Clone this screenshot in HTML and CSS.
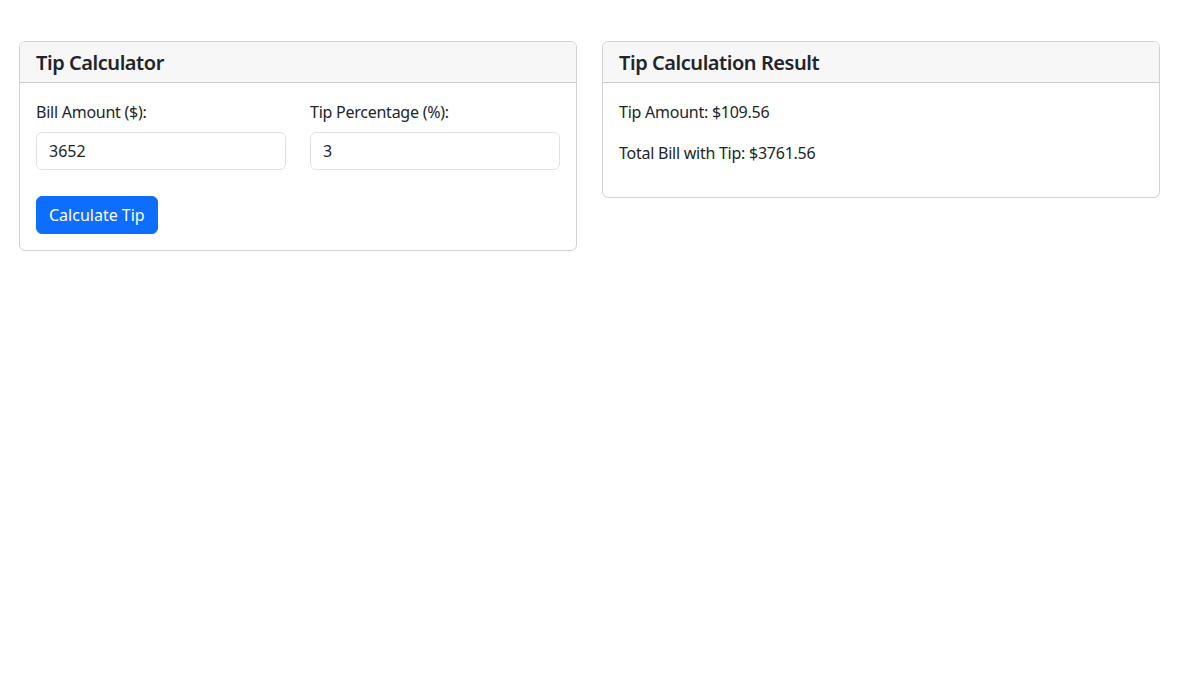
FILE: index.html
```html
<!DOCTYPE html>
<html lang="en">
<head>
  <meta charset="UTF-8" />
  <meta name="viewport" content="width=device-width, initial-scale=1.0"/>
  <title>Tip Calculator</title>
  <link rel="stylesheet" href="styles.css">
</head>
<body>
  <div class="page">
    <div class="card">
      <div class="card-header">
        <h5>Tip Calculator</h5>
      </div>
      <div class="card-body">
        <div class="fields">
          <div class="field">
            <label for="bill">Bill Amount ($):</label>
            <input type="number" id="bill" value="3652" />
          </div>
          <div class="field">
            <label for="tip">Tip Percentage (%):</label>
            <input type="number" id="tip" value="3" />
          </div>
        </div>
        <button class="btn" onclick="calculateTip()">Calculate Tip</button>
      </div>
    </div>

    <div class="card">
      <div class="card-header">
        <h5>Tip Calculation Result</h5>
      </div>
      <div class="card-body">
        <p>Tip Amount: $<span id="tipAmount">109.56</span></p>
        <p>Total Bill with Tip: $<span id="totalBill">3761.56</span></p>
      </div>
    </div>
  </div>

  <script>
    function calculateTip() {
      const bill = parseFloat(document.getElementById("bill").value) || 0;
      const pct = parseFloat(document.getElementById("tip").value) || 0;
      const tip = bill * pct / 100;
      document.getElementById("tipAmount").textContent = tip.toFixed(2);
      document.getElementById("totalBill").textContent = (bill + tip).toFixed(2);
    }
  </script>
</body>
</html>
```

FILE: styles.css
```css
body {
  margin: 0;
  font-family: "Segoe UI", "Noto Sans", sans-serif;
  font-size: 16px;
  line-height: 1.5;
  letter-spacing: -0.25px;
  color: #212529;
  background: #fff;
}

.page {
  display: flex;
  gap: 25px;
  padding: 41px 20px 0 19px;
  align-items: flex-start;
}

.card {
  flex: 1;
  border: 1px solid rgba(0, 0, 0, 0.175);
  border-radius: 6px;
  overflow: hidden;
}

.card-header {
  padding: 9px 16px 7px;
  background: #f7f7f7;
  border-bottom: 1px solid rgba(0, 0, 0, 0.175);
}

.card-header h5 {
  margin: 0;
  font-size: 20px;
  font-weight: 600;
  line-height: 1.2;
  letter-spacing: -0.45px;
}

.card-body {
  padding: 17px 16px 16px;
}

.fields {
  display: grid;
  grid-template-columns: 1fr 1fr;
  column-gap: 24px;
  margin-bottom: 26px;
}

.field label {
  display: block;
  margin-bottom: 8px;
}

.field input {
  display: block;
  width: 100%;
  box-sizing: border-box;
  height: 38px;
  padding: 6px 12px;
  font: inherit;
  color: #212529;
  border: 1px solid #dee2e6;
  border-radius: 6px;
  appearance: textfield;
  -moz-appearance: textfield;
}

.field input::-webkit-outer-spin-button,
.field input::-webkit-inner-spin-button {
  -webkit-appearance: none;
  margin: 0;
}

.btn {
  display: block;
  height: 38px;
  padding: 6px 12px;
  font: inherit;
  color: #fff;
  background: #0d6efd;
  border: 1px solid #0d6efd;
  border-radius: 6px;
  cursor: pointer;
}

.btn:hover {
  background: #0b5ed7;
}

p {
  margin: 0 0 17px;
}

p:last-child {
  margin-bottom: 16px;
}
```
